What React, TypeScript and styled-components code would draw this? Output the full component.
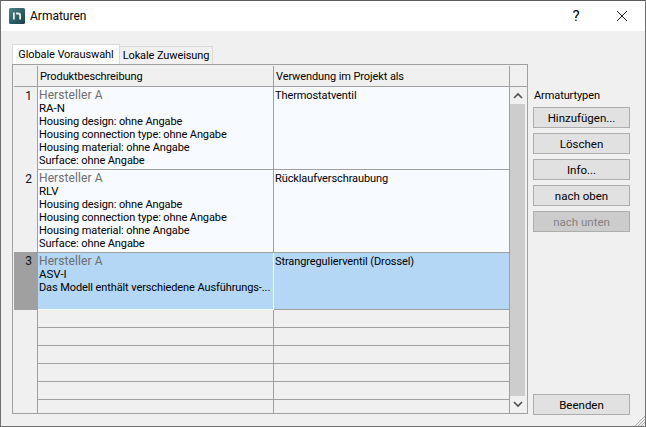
import React from "react";
import styled, { createGlobalStyle } from "styled-components";

const Global = createGlobalStyle`
  html, body { margin: 0; padding: 0; background: #f0f0f0; }
  * { box-sizing: border-box; }
`;

const Win = styled.div`
  width: 646px; height: 427px; background: #f0f0f0; border: 1px solid #6f6f6f;
  border-top-color: #5c5c5c; display: flex; flex-direction: column; position: relative;
  font-family: Roboto, "Liberation Sans", sans-serif; font-size: 11px; letter-spacing: -0.1px; color: #000; overflow: hidden;
`;
const TitleBar = styled.div`
  height: 30px; background: #fff; display: flex; align-items: center; padding-left: 8px; flex: none;
`;
const Logo = styled.svg`width: 16px; height: 16px; flex: none;`;
const Title = styled.div`margin-left: 5px; font-size: 12px; letter-spacing: 0; flex: 1;`;
const Help = styled.div`width: 46px; text-align: center; font-size: 15px;`;
const Close = styled.svg`width: 46px; height: 14px; flex: none;`;
const Body = styled.div`flex: 1; display: flex; padding: 13px 0 0 11px; min-height: 0;`;
const Left = styled.div`width: 516px; flex: none; display: flex; flex-direction: column;`;
const Tabs = styled.div`display: flex; align-items: flex-end; height: 20px; flex: none;`;
const Tab = styled.div<{ $active?: boolean }>`
  height: ${(p) => (p.$active ? 20 : 18)}px;
  width: ${(p) => (p.$active ? 108 : 93)}px;
  background: ${(p) => (p.$active ? "#fff" : "#f0f0f0")};
  border: 1px solid #d9d9d9; border-bottom: none;
  ${(p) => (p.$active ? "" : "border-left: none;")}
  display: flex; align-items: center; justify-content: center; white-space: nowrap; line-height: 16px;
`;
const Grid = styled.div`
  width: 516px; height: 350px; border: 1px solid #a0a0a0; padding: 1px 0 0 1px; background: #f0f0f0;
  display: grid; grid-template-columns: 496px 17px; grid-template-rows: 21px 1fr; flex: none;
`;
const HeadRow = styled.div`
  grid-column: 1 / 3; display: grid; grid-template-columns: 24px 236px 236px 1fr; border-bottom: 1px solid #a0a0a0;
`;
const HeadCell = styled.div`
  border-right: 1px solid #a0a0a0; padding-left: 2px; line-height: 21px; white-space: nowrap;
  &:last-child { border-right: none; }
`;
const Rows = styled.div`display: flex; flex-direction: column; min-width: 0; overflow: hidden;`;
const Row = styled.div<{ $h: number }>`
  height: ${(p) => p.$h}px; flex: none; display: grid; grid-template-columns: 24px 236px 236px;
`;
const Num = styled.div<{ $sel?: boolean }>`
  border-right: 1px solid #a0a0a0; text-align: right; padding: 2px 5px 0 0; line-height: 14px; font-size: 12px;
  color: #10131c;
  background: ${(p) => (p.$sel ? "#a0a0a0" : "#f0f0f0")};
  ${(p) => (p.$sel ? "margin-top: -1px;" : "")}
`;
const Cell = styled.div<{ $sel?: boolean; $first?: boolean }>`
  background: ${(p) => (p.$sel ? "#b3d7f5" : "#f7fbff")};
  border-right: 1px solid ${(p) => (p.$sel && p.$first ? "#f7fbff" : "#a0a0a0")};
  border-bottom: 1px solid ${(p) => (p.$sel && p.$first ? "#f7fbff" : "#a0a0a0")};
  padding: 2px 0 0 1px; line-height: 13px; white-space: nowrap; overflow: hidden;
`;
const Maker = styled.div`color: #6d6d6d; font-size: 12px; line-height: 13px; letter-spacing: 0.1px;`;
const Model = styled.div`font-size: 11.5px; line-height: 13px; letter-spacing: 0;`;
const Line = styled.div`line-height: 13px;`;
const EmptyHead = styled.div`border-right: 1px solid #a0a0a0;`;
const EmptyCell = styled.div`border-right: 1px solid #a0a0a0; border-bottom: 1px solid #a0a0a0;`;
const Scroll = styled.div`display: flex; flex-direction: column; background: #f0f0f0;`;
const Arrow = styled.svg`width: 17px; height: 17px; flex: none; background: #f0f0f0;`;
const Thumb = styled.div`flex: 1; background: #cdcdcd; width: 15px;`;
const Side = styled.div`
  width: 97px; margin-left: 5px; padding-top: 44px; padding-bottom: 6px; display: flex; flex-direction: column; flex: none;
`;
const Label = styled.div`line-height: 15px; height: 19px; padding-left: 1px;`;
const Btn = styled.div<{ $off?: boolean }>`
  height: 21px; width: 97px; margin-bottom: 5px; flex: none; font-size: 11.5px; letter-spacing: 0;
  border: 1px solid #adadad; background: ${(p) => (p.$off ? "#cccccc" : "#e1e1e1")};
  color: ${(p) => (p.$off ? "#838383" : "#000")};
  display: flex; align-items: center; justify-content: center;
`;
const Spacer = styled.div`flex: 1;`;
const Grip = styled.svg`position: absolute; right: 0; bottom: 0; width: 12px; height: 12px;`;

const attrs = ["Housing design: ohne Angabe", "Housing connection type: ohne Angabe", "Housing material: ohne Angabe", "Surface: ohne Angabe"];

export default function App() {
  return (
    <Win>
      <Global />
      <TitleBar>
        <Logo viewBox="0 0 16 16">
          <defs>
            <linearGradient id="lg" x1="0" y1="0" x2="1" y2="1">
              <stop offset="0" stopColor="#4f8287" />
              <stop offset="1" stopColor="#12414a" />
            </linearGradient>
          </defs>
          <rect width="16" height="16" rx="1.5" fill="url(#lg)" />
          <path d="M4 4.5h1.8v7H4z" fill="#e4eeee" />
          <path d="M7 4.5h2.2A2.8 2.8 0 0 1 12 7.3v4.2h-1.8V7.6a1.1 1.1 0 0 0-1.1-1.1H7z" fill="#e4eeee" />
        </Logo>
        <Title>Armaturen</Title>
        <Help>?</Help>
        <Close viewBox="0 0 46 14">
          <path d="M18 2l10 10M28 2L18 12" stroke="#222" strokeWidth="1" fill="none" />
        </Close>
      </TitleBar>
      <Body>
        <Left>
          <Tabs>
            <Tab $active>Globale Vorauswahl</Tab>
            <Tab>Lokale Zuweisung</Tab>
          </Tabs>
          <Grid>
            <HeadRow>
              <HeadCell />
              <HeadCell>Produktbeschreibung</HeadCell>
              <HeadCell>Verwendung im Projekt als</HeadCell>
              <HeadCell />
            </HeadRow>
            <Rows>
              <Row $h={83}>
                <Num>1</Num>
                <Cell>
                  <Maker>Hersteller A</Maker>
                  <Model>RA-N</Model>
                  {attrs.map((a) => <Line key={a}>{a}</Line>)}
                </Cell>
                <Cell>Thermostatventil</Cell>
              </Row>
              <Row $h={83}>
                <Num>2</Num>
                <Cell>
                  <Maker>Hersteller A</Maker>
                  <Model>RLV</Model>
                  {attrs.map((a) => <Line key={a}>{a}</Line>)}
                </Cell>
                <Cell>Rücklaufverschraubung</Cell>
              </Row>
              <Row $h={57}>
                <Num $sel>3</Num>
                <Cell $sel $first>
                  <Maker>Hersteller A</Maker>
                  <Model>ASV-I</Model>
                  <Line>Das Modell enthält verschiedene Ausführungs-...</Line>
                </Cell>
                <Cell $sel>Strangregulierventil (Drossel)</Cell>
              </Row>
              {[18, 18, 18, 18, 18, 14].map((h, i) => (
                <Row $h={h} key={i}>
                  <EmptyHead />
                  {i < 5 ? <EmptyCell /> : <EmptyHead />}
                  {i < 5 ? <EmptyCell /> : <EmptyHead />}
                </Row>
              ))}
            </Rows>
            <Scroll>
              <Arrow viewBox="0 0 17 17"><path d="M4 11l4-4 4 4" stroke="#505050" strokeWidth="1.6" fill="none" /></Arrow>
              <Thumb />
              <Arrow viewBox="0 0 17 17"><path d="M4 6l4 4 4-4" stroke="#505050" strokeWidth="1.6" fill="none" /></Arrow>
            </Scroll>
          </Grid>
        </Left>
        <Side>
          <Label>Armaturtypen</Label>
          <Btn>Hinzufügen...</Btn>
          <Btn>Löschen</Btn>
          <Btn>Info...</Btn>
          <Btn>nach oben</Btn>
          <Btn $off>nach unten</Btn>
          <Spacer />
          <Btn>Beenden</Btn>
        </Side>
      </Body>
      <Grip viewBox="0 0 12 12">
        <path d="M12 2L2 12M12 5L5 12M12 8L8 12" stroke="#a8a8a8" strokeWidth="1" fill="none" />
      </Grip>
    </Win>
  );
}
